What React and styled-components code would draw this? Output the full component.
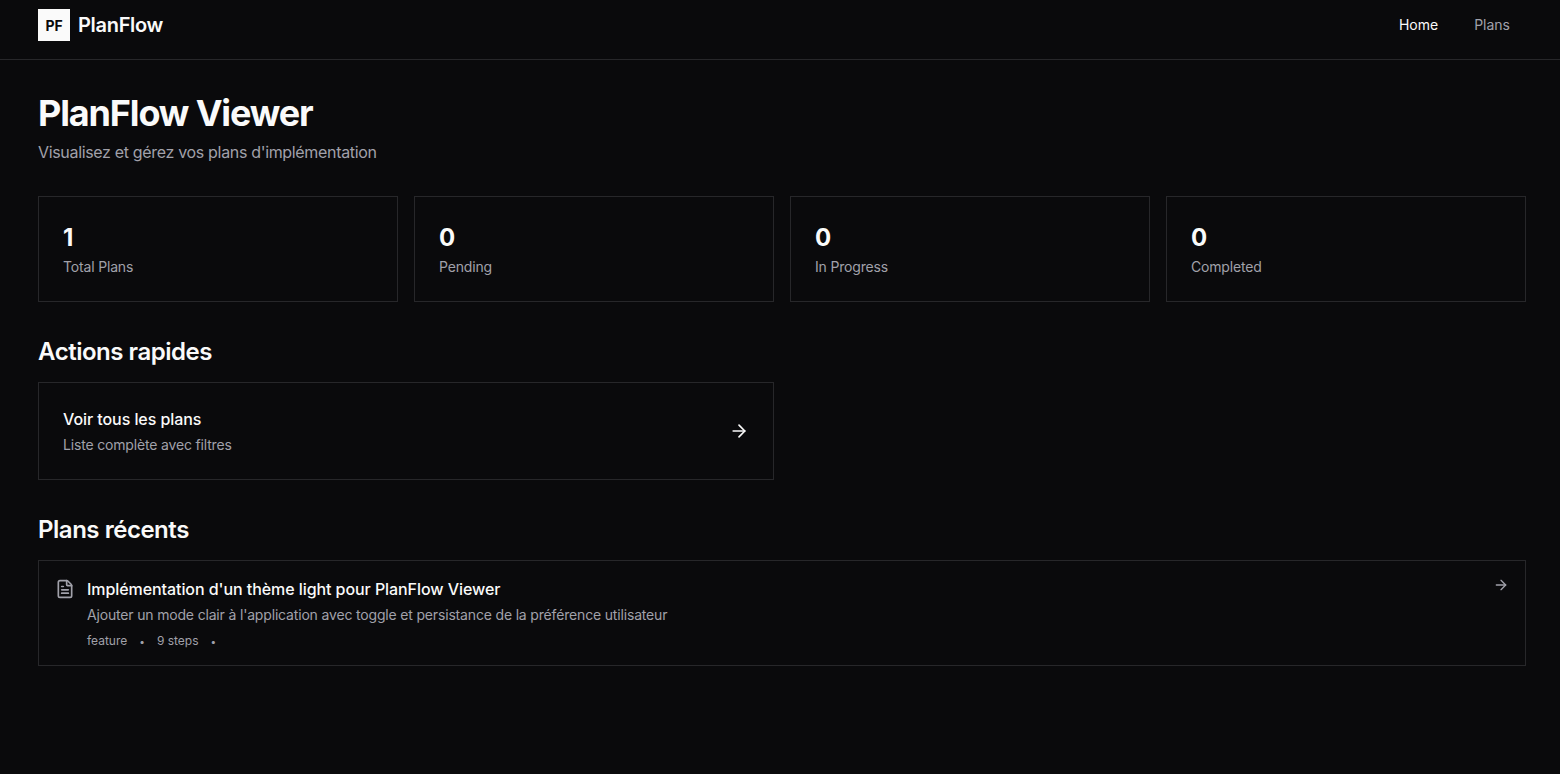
import React from "react";
import styled, { createGlobalStyle } from "styled-components";
import { ArrowRight, FileText } from "lucide-react";

const GlobalStyle = createGlobalStyle`
  html, body {
    margin: 0;
    background: #0a0a0c;
    color: #fafafa;
    font-family: Inter, "Liberation Sans", sans-serif;
  }
  * { box-sizing: border-box; }
`;

const Page = styled.div`
  min-height: 100vh;
  background: #0a0a0c;
`;

const TopBar = styled.header`
  height: 60px;
  border-bottom: 1px solid #27272a;
  padding: 0 34px 0 38px;
  display: flex;
  align-items: center;
  justify-content: space-between;
`;

const Brand = styled.div`
  display: flex;
  align-items: center;
  gap: 8px;
  margin-top: -9px;
`;

const LogoBox = styled.div`
  width: 32px;
  height: 32px;
  background: #fafafa;
  color: #0a0a0c;
  display: flex;
  align-items: center;
  justify-content: center;
  font-size: 14px;
  font-weight: 700;
  letter-spacing: -0.2px;
`;

const BrandName = styled.span`
  font-size: 20px;
  font-weight: 600;
  letter-spacing: -0.3px;
`;

const Nav = styled.nav`
  display: flex;
  gap: 4px;
  margin-top: -9px;
`;

const NavLink = styled.a`
  padding: 8px 16px;
  font-size: 14px;
  line-height: 20px;
  font-weight: 400;
  color: ${(p) => (p.$active ? "#fafafa" : "#a1a1aa")};
`;

const Main = styled.main`
  padding: 33px 34px 0 38px;
`;

const Title = styled.h1`
  margin: 0;
  font-size: 36px;
  line-height: 40px;
  font-weight: 700;
  letter-spacing: -1.15px;
`;

const Subtitle = styled.p`
  margin: 7px 0 0;
  font-size: 16px;
  line-height: 24px;
  letter-spacing: -0.33px;
  color: #a1a1aa;
`;

const StatGrid = styled.div`
  margin-top: 32px;
  display: grid;
  grid-template-columns: repeat(4, 1fr);
  gap: 16px;
`;

const Card = styled.div`
  border: 1px solid #27272a;
`;

const StatCard = styled(Card)`
  height: 106px;
  padding: 25px 24px 0;
`;

const StatValue = styled.div`
  font-size: 24px;
  line-height: 32px;
  font-weight: 700;
`;

const StatLabel = styled.div`
  margin-top: 3px;
  font-size: 14px;
  line-height: 20px;
  letter-spacing: -0.17px;
  color: #a1a1aa;
`;

const SectionTitle = styled.h2`
  margin: 34px 0 14px;
  font-size: 24px;
  line-height: 32px;
  font-weight: 600;
  letter-spacing: -0.47px;
`;

const ActionGrid = styled.div`
  display: grid;
  grid-template-columns: repeat(2, 1fr);
  gap: 16px;
`;

const ActionCard = styled(Card)`
  height: 98px;
  padding: 0 24px;
  display: flex;
  align-items: center;
  justify-content: space-between;
  color: #fafafa;
`;

const CardTitle = styled.div`
  font-size: 16px;
  line-height: 24px;
  font-weight: 500;
  letter-spacing: -0.07px;
`;

const CardDesc = styled.div`
  margin-top: 4px;
  font-size: 14px;
  line-height: 20px;
  letter-spacing: -0.17px;
  color: #a1a1aa;
`;

const PlanCard = styled(Card)`
  height: 106px;
  padding: 16px 16px 0;
  display: flex;
  gap: 12px;
  align-items: flex-start;
`;

const PlanIcon = styled.div`
  color: #a1a1aa;
  display: flex;
  padding-top: 2px;
`;

const PlanBody = styled.div`
  flex: 1;
  min-width: 0;
`;

const Meta = styled.div`
  margin-top: 8px;
  display: flex;
  align-items: center;
  gap: 12px;
  font-size: 12px;
  line-height: 16px;
  color: #a1a1aa;
`;

const Dot = styled.span`
  font-size: 10px;
`;

const PlanArrow = styled.div`
  color: #a1a1aa;
  display: flex;
`;

const stats = [
  { value: 1, label: "Total Plans" },
  { value: 0, label: "Pending" },
  { value: 0, label: "In Progress" },
  { value: 0, label: "Completed" },
];

export default function App() {
  return (
    <Page>
      <GlobalStyle />
      <TopBar>
        <Brand>
          <LogoBox>PF</LogoBox>
          <BrandName>PlanFlow</BrandName>
        </Brand>
        <Nav>
          <NavLink $active>Home</NavLink>
          <NavLink>Plans</NavLink>
        </Nav>
      </TopBar>

      <Main>
        <Title>PlanFlow Viewer</Title>
        <Subtitle>Visualisez et gérez vos plans d'implémentation</Subtitle>

        <StatGrid>
          {stats.map((s) => (
            <StatCard key={s.label}>
              <StatValue>{s.value}</StatValue>
              <StatLabel>{s.label}</StatLabel>
            </StatCard>
          ))}
        </StatGrid>

        <SectionTitle>Actions rapides</SectionTitle>
        <ActionGrid>
          <ActionCard>
            <div>
              <CardTitle>Voir tous les plans</CardTitle>
              <CardDesc>Liste complète avec filtres</CardDesc>
            </div>
            <ArrowRight size={20} />
          </ActionCard>
        </ActionGrid>

        <SectionTitle>Plans récents</SectionTitle>
        <PlanCard>
          <PlanIcon>
            <FileText size={20} />
          </PlanIcon>
          <PlanBody>
            <CardTitle>Implémentation d'un thème light pour PlanFlow Viewer</CardTitle>
            <CardDesc>
              Ajouter un mode clair à l'application avec toggle et persistance de la préférence utilisateur
            </CardDesc>
            <Meta>
              <span>feature</span>
              <Dot>•</Dot>
              <span>9 steps</span>
              <Dot>•</Dot>
            </Meta>
          </PlanBody>
          <PlanArrow>
            <ArrowRight size={16} />
          </PlanArrow>
        </PlanCard>
      </Main>
    </Page>
  );
}
